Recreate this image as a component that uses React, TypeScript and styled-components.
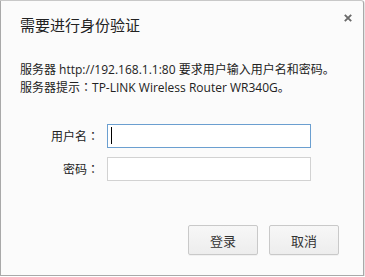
import React from "react";
import styled, { createGlobalStyle } from "styled-components";

const Global = createGlobalStyle`
  html, body { margin: 0; padding: 0; background: #ffffff; }
  body { font-family: "Noto Sans CJK SC", "Noto Sans", sans-serif; }
  * { box-sizing: border-box; }
`;

const Dialog = styled.div`
  width: 364px;
  height: 276px;
  background: #fbfbfb;
  border: 1px solid #a9a9a9;
  border-top-color: #c8c8c8;
  border-radius: 0 3px 0 0;
  box-shadow: 1px 1px 1px rgba(0, 0, 0, 0.12);
  display: flex;
  flex-direction: column;
  color: #222;
`;

const Header = styled.div`
  display: flex;
  justify-content: space-between;
  align-items: flex-start;
  padding: 12px 11px 0 19px;
`;

const Title = styled.h1`
  margin: 2px 0 0;
  font-size: 15px;
  font-weight: 400;
  line-height: 20px;
  color: #222;
`;

const Close = styled.button`
  border: 0;
  background: transparent;
  padding: 0;
  width: 9px;
  height: 9px;
  display: flex;
  align-items: center;
  justify-content: center;
  cursor: pointer;
`;

const Message = styled.div`
  margin-top: 26px;
  padding: 0 19px;
  font-size: 12px;
  line-height: 17px;
  color: #222;
  font-family: "Open Sans", "Noto Sans CJK SC", sans-serif;
`;

const Line = styled.div`
  white-space: nowrap;
`;

const Colon = styled.span`
  font-family: "Noto Sans CJK JP", "Noto Sans CJK SC", sans-serif;
`;

const Form = styled.div`
  margin-top: 28px;
  display: grid;
  grid-template-columns: 98px 204px;
  column-gap: 8px;
  row-gap: 9px;
  align-items: center;
`;

const Label = styled.label`
  text-align: right;
  font-size: 12px;
  line-height: 24px;
  color: #222;
`;

const Field = styled.div`
  position: relative;
  width: 204px;
  height: 24px;
`;

const Input = styled.input<{ $focused?: boolean }>`
  display: block;
  width: 204px;
  height: 24px;
  border: 1px solid ${(p) => (p.$focused ? "#6b9fd0" : "#d2d2d2")};
  background: #ffffff;
  padding: 0 3px;
  font-size: 13px;
  outline: none;
  caret-color: transparent;
`;

const Caret = styled.span`
  position: absolute;
  left: 4px;
  top: 3px;
  width: 1px;
  height: 17px;
  background: #000;
  pointer-events: none;
`;

const Footer = styled.div`
  margin-top: 44px;
  display: flex;
  justify-content: flex-end;
  gap: 11px;
  padding-right: 24px;
`;

const Button = styled.button`
  width: 70px;
  height: 30px;
  border: 1px solid #c9c9c9;
  border-radius: 2px;
  background: linear-gradient(#f7f7f7, #ededed);
  font-family: "Noto Sans CJK SC", sans-serif;
  font-size: 13px;
  color: #333;
  padding: 0;
  box-shadow: 0 1px 0 rgba(0, 0, 0, 0.04);
`;

export default function App() {
  return (
    <>
      <Global />
      <Dialog>
        <Header>
          <Title>需要进行身份验证</Title>
          <Close aria-label="关闭">
            <svg width="8" height="8" viewBox="0 0 8 8">
              <path d="M0.8 0.8L7.2 7.2M7.2 0.8L0.8 7.2" stroke="#6a6a6a" strokeWidth="1.9" />
            </svg>
          </Close>
        </Header>
        <Message>
          <Line>服务器 http://192.168.1.1:80 要求用户输入用户名和密码。</Line>
          <Line>
            服务器提示<Colon>：</Colon>TP-LINK Wireless Router WR340G。
          </Line>
        </Message>
        <Form>
          <Label>
            用户名<Colon>：</Colon>
          </Label>
          <Field>
            <Input $focused />
            <Caret />
          </Field>
          <Label>
            密码<Colon>：</Colon>
          </Label>
          <Field>
            <Input type="password" />
          </Field>
        </Form>
        <Footer>
          <Button>登录</Button>
          <Button>取消</Button>
        </Footer>
      </Dialog>
    </>
  );
}
